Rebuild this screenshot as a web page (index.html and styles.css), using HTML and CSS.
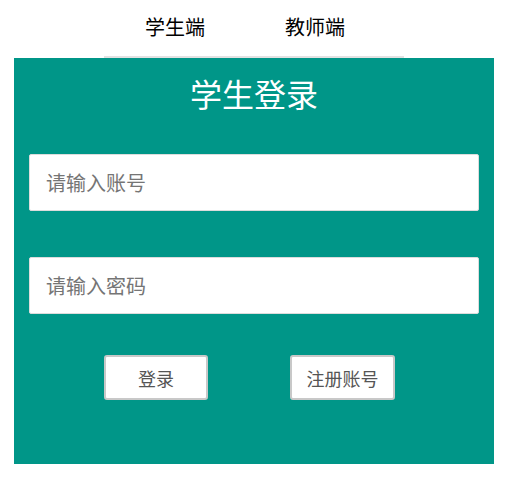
FILE: index.html
```
<!DOCTYPE html>
<html lang="zh-CN">
<head>
  <meta charset="UTF-8">
  <meta name="viewport" content="width=device-width, initial-scale=1.0">
  <title>登录</title>
  <link rel="stylesheet" href="styles.css">
</head>
<body>
  <div class="wrap">
    <!-- Tabs -->
    <ul class="tabs">
      <li class="tab active">学生端</li>
      <li class="tab">教师端</li>
    </ul>

    <!-- Login panel -->
    <div class="panel">
      <h2 class="panel-title">学生登录</h2>
      <form class="form">
        <input class="field" type="text" placeholder="请输入账号">
        <input class="field" type="password" placeholder="请输入密码">
        <div class="actions">
          <button class="btn" type="button">登录</button>
          <button class="btn btn-wide" type="button">注册账号</button>
        </div>
      </form>
    </div>
  </div>
</body>
</html>
```

FILE: styles.css
```
body {
  margin: 0;
  padding: 0;
  background: #fff;
  font-family: "Noto Sans CJK SC", "Noto Sans", sans-serif;
  color: #000;
}

.wrap {
  width: 480px;
  margin: 0 0 0 14px;
}

.tabs {
  list-style: none;
  margin: 0 auto;
  padding: 0 0 0 1px;
  width: 299px;
  height: 56px;
  display: flex;
  border-bottom: 2px solid #e2e2e2;
}

.tab {
  padding: 0 40px;
  font-size: 20px;
  line-height: 54px;
  cursor: pointer;
}

.panel {
  background-color: #009688;
  padding: 0 15px 64px;
}

.panel-title {
  margin: 0;
  color: #fff;
  font-weight: 400;
  font-size: 32px;
  line-height: 70px;
  text-align: center;
}

.form {
  padding-top: 26px;
}

.field {
  display: block;
  box-sizing: border-box;
  width: 100%;
  height: 57px;
  margin: 0 0 46px;
  padding: 0 16px;
  border: 1px solid #dcdcdc;
  border-radius: 2px;
  background: #fff;
  font-family: inherit;
  font-size: 20px;
  outline: none;
}

.field:last-of-type {
  margin-bottom: 41px;
}

.field::placeholder {
  color: #757575;
}

.actions {
  display: flex;
  gap: 82px;
  padding-left: 75px;
}

.btn {
  box-sizing: border-box;
  width: 104px;
  height: 45px;
  border: 2px solid #c8c8c8;
  border-radius: 3px;
  background: #fff;
  color: #555;
  font-family: inherit;
  font-size: 18px;
  cursor: pointer;
}

.btn-wide {
  width: 105px;
}
```
